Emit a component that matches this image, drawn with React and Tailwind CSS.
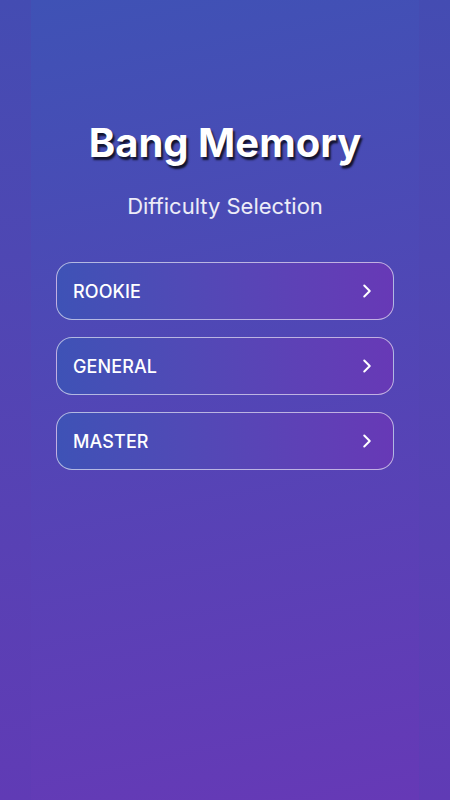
import { ChevronRight } from 'lucide-react'

const LEVELS = ['ROOKIE', 'GENERAL', 'MASTER']

function LevelButton({ label }) {
  return (
    <button className="w-full h-[58px] rounded-[16px] border border-white/60 bg-linear-to-r from-[#3e52b6] to-[#6739b6] pl-4 pr-[15px] flex items-center justify-between text-white">
      <span className="text-[18px] font-medium tracking-[0.1px]">{label}</span>
      <ChevronRight size={22} strokeWidth={2.2} />
    </button>
  )
}

export default function App() {
  return (
    <div className="min-h-[800px] w-full bg-linear-to-b from-[#444cb2] to-[#603bb5] font-['Inter',sans-serif]">
      <div className="mx-auto w-[388px] min-h-[800px] bg-[linear-gradient(168deg,#3f52b5,#6639b6)] flex flex-col items-center pt-[119px]">
        <h1 className="text-[40px] leading-[48px] font-bold text-white [text-shadow:2px_3px_2px_rgba(0,0,0,0.75)]">
          Bang Memory
        </h1>
        <p className="mt-[24px] text-[22px] leading-[30px] text-white/90">Difficulty Selection</p>
        <div className="mt-[41px] w-[338px] flex flex-col gap-[17px]">
          {LEVELS.map((l) => (
            <LevelButton key={l} label={l} />
          ))}
        </div>
      </div>
    </div>
  )
}
